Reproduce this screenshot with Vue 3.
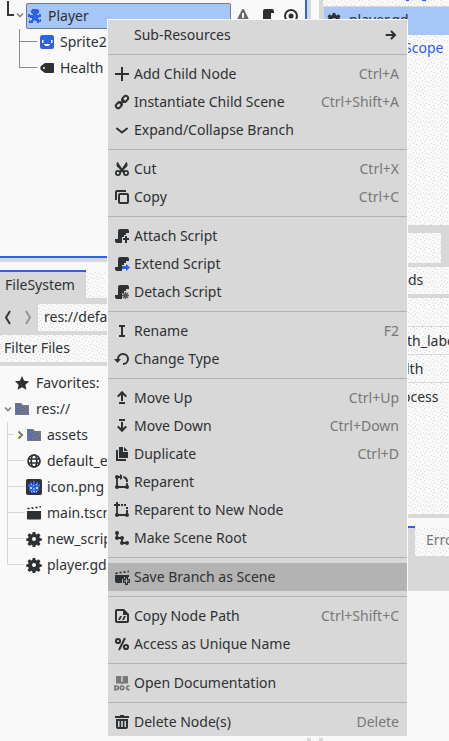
<script setup>
import { h } from 'vue'

const roll = 'M6 1a2 2 0 0 0-2 2v8H1v2a2 2 0 0 0 2 2h7a2 2 0 0 0 2-2V5h3V3a2 2 0 0 0-2-2z'
const rollCut = 'M6 1a2 2 0 0 0-2 2v8H1v2a2 2 0 0 0 2 2h5V9h2V7h2V5h3V3a2 2 0 0 0-2-2z'
const gear = '<path fill-rule="evenodd" d="M6.700 1h2.600l.4 2 1.200.5 1.700-1.200 1.900 1.900-1.200 1.700.5 1.200 2 .4v2.200l-2 .4-.5 1.200 1.200 1.700-1.900 1.900-1.700-1.200-1.200.5-.4 2H6.700l-.4-2-1.200-.5-1.700 1.200-1.900-1.900 1.200-1.700-.5-1.200-2-.4V7.500l2-.4.5-1.200-1.200-1.700 1.900-1.900 1.700 1.200 1.200-.5zM8 6a2 2 0 1 0 0 4 2 2 0 0 0 0-4z"/>'
const folder = '<path fill="#75797e" d="M1 2h6l2 2h6v10H1z"/><path fill="#2b62e8" d="M2 3h2v1H2zm3 0h1v1H5zM3 5h1v1H3zm3 0h1v1H6zM2 7h1v1H2zm2 0h2v1H4zm4-1h1v1H8zM2 9h1v1H2zm3 0h1v1H5zm2-1h1v1H7zm3-1h1v1h-1zm2-1h1v1h-1zM3 11h2v1H3zm4-1h1v1H7zm2-1h1v1H9zm3 0h1v1h-1zm-2 2h1v1h-1zm-2 1h1v1H8zm5-1h1v1h-1zm-8 1h1v1H5z"/>'

const icons = {
  blank: '',
  add: '<path d="M7 1v6H1v2h6v6h2V9h6V7H9V1z"/>',
  link: '<g fill="none" stroke="currentColor" stroke-width="2"><rect x="-3" y="-2.300" width="6.500" height="4.600" rx="2.300" transform="translate(4.700 11.300) rotate(-45)"/><rect x="-3.500" y="-2.300" width="6.500" height="4.600" rx="2.300" transform="translate(11.300 4.700) rotate(-45)"/><path d="M5.800 10.200l4.400-4.400"/></g>',
  chevron: '<path d="M3 6.500l5 4 5-4" fill="none" stroke="currentColor" stroke-width="2" stroke-linecap="round"/>',
  cut: '<path d="M3.500.7C1.800 3.300 2.300 5 4 6.500L6.500 9l-2 1.500 1.600 1.700L8 11l1.900 1.200 1.600-1.700-2-1.500L12 6.500c1.700-1.500 2.200-3.200.5-5.800L8 7.500z"/><circle cx="4" cy="12" r="2.100" fill="none" stroke="currentColor" stroke-width="1.800"/><circle cx="12" cy="12" r="2.100" fill="none" stroke="currentColor" stroke-width="1.800"/>',
  copy: '<path d="M1 11V3a2 2 0 0 1 2-2h9v2H3v8z"/><rect x="5" y="5" width="9" height="9" rx="1" fill="none" stroke="currentColor" stroke-width="2"/>',
  attach: `<path d="${rollCut}"/><path d="M11 8h2v2h2v2h-2v3h-2v-3H9v-2h2z"/>`,
  extend: `<path d="${rollCut}"/><path fill="#2b62e8" d="M8 10h4V8l4 3.500-4 3.500v-2H8z"/>`,
  detach: `<path d="${rollCut}"/><path d="M9 9l5 5m0-5l-5 5m2.500-6v7M8 11.500h7" stroke="#555" stroke-width="1.300"/>`,
  script: `<path d="${roll}"/>`,
  rename: '<path d="M5 2h6v2H9v8h2v2H5v-2h2V4H5z"/>',
  change: '<path d="M4 9V8a5 5 0 1 1 5 5" fill="none" stroke="currentColor" stroke-width="2"/><path d="M0 8h7l-3.500 4z"/>',
  up: '<path d="M8 .7L13 6l-1.300 1.200L9 5v6H7V5L4.300 7.200 3 6zM5 12h6v2H5z"/>',
  down: '<path d="M5 1h6v2H5zM7 4h2v6l2.700-2.200L13 9l-5 5.300L3 9l1.300-1.200L7 10z"/>',
  duplicate: '<path d="M2 4h2v9h8v2H2zM5 1h4v5h5v6H5zM10 1l4 4h-4z"/>',
  reparent: '<path d="M3 3v10h10V9M3 3h4" fill="none" stroke="currentColor" stroke-width="1.800"/><circle cx="3" cy="3" r="2"/><circle cx="3" cy="13" r="2"/><circle cx="13" cy="13" r="2"/><path d="M6 0v6l4-3zM8 2c4 0 6 2 6 6h-2c0-3-1-4-4-4z"/>',
  reparentNew: '<path d="M3 4v9h10V9" fill="none" stroke="currentColor" stroke-width="1.800"/><path d="M2 0h2v2h2v2H4v2H2V4H0V2h2zM7 2h2v2H7zm3 0h2v2h-2zm2 3h2v2h-2zm0 3h2v2h-2z"/><circle cx="3" cy="13" r="2"/><circle cx="13" cy="13" r="2"/>',
  root: '<path d="M3 3v5h5v5h5" fill="none" stroke="currentColor" stroke-width="1.800"/><circle cx="3" cy="3" r="2"/><circle cx="3" cy="8" r="2"/><circle cx="8" cy="8" r="2"/><circle cx="8" cy="13" r="2"/><circle cx="13" cy="13" r="2"/>',
  save: '<path d="M1 4l2-1 1 1.500-2 1zM5 3l2-.5L8 4l-2 .5zM9 2.500l2-.5 1 1.500-2 .5zM13 2l2-.5V3l-1 .5zM1 6h14v2h-5v2H8v4H3a2 2 0 0 1-2-2z"/><path fill-rule="evenodd" d="M11 8h3v2h2v4h-2v2h-3v-2H9v-4h2zm1 1.500v2h-2v1h2v2h1v-2h2v-1h-2v-2z"/>',
  clap: '<path d="M1 3l2-.5L4 4l-2 .5zM5 2.500L7 2l1 1.500L6 4zM9 2l2-.5L12 3l-2 .5zM13 1.500l2-.5v1.500l-1 .5zM1 6h14v7.500a1 1 0 0 1-1 1H2a1 1 0 0 1-1-1z"/>',
  path: '<path fill-rule="evenodd" d="M3 1h7l5 5v7a2 2 0 0 1-2 2H3a2 2 0 0 1-2-2V3a2 2 0 0 1 2-2zm0 2v10h10V7H9V3z"/><path d="M6 8h2l-2 4H4zm4 0h2l-2 4H8z"/>',
  percent: '<g fill="none" stroke="currentColor" stroke-width="2"><circle cx="4" cy="5" r="2.100"/><circle cx="12" cy="11" r="2.100"/><path d="M11 2L5 14"/></g>',
  doc: '<path fill="#777" d="M2 2a1 1 0 0 1 1-1h4.300v6H2zM8.700 1H13a1 1 0 0 1 1 1v5H8.700zM2 7h12v1.500H9L8 9.500 7 8.500H2z"/><g fill="none" stroke="#777" stroke-width="1.700"><path d="M1 11h1.500a1.800 1.800 0 0 1 0 3.700H1z"/><circle cx="8" cy="12.800" r="1.800"/><path d="M15.500 11h-1a1.800 1.800 0 0 0 0 3.700h1"/></g>',
  trash: '<path d="M6 1h4v1h5v2H1V2h5z"/><path fill-rule="evenodd" d="M2 5h12v8a2 2 0 0 1-2 2H4a2 2 0 0 1-2-2zm2 2v6h1.500V7zm3.200 0v6h1.600V7zm3.300 0v6H12V7z"/>',
  arrow: '<path d="M3.500 8h8M8.500 4.500L12 8l-3.500 3.500" fill="none" stroke="currentColor" stroke-width="2" stroke-linecap="round"/>',
  body: '<path fill="#2b62e8" fill-rule="evenodd" d="M5 1h6v1h1v3h-1v1h-1v1h2V6h2v3h-2v1h-1v1h1v1h1v-1h1v3h-2v1h-2v-2H8v-1H7v1H6v2H2v-3h1v1h1v-1h1v-2H3V9H1V6h2v1h3V6H5V5H4V2h1z"/>',
  sprite: '<rect x="1" y="1" width="14" height="14" rx="2.500" fill="#2b62e8"/><path fill="#fff" d="M3 6h1.500v3H3zm9 0h1.500v3H12zM5 10h6v1H5zm1 1h4v1H6z"/>',
  tag: '<path fill-rule="evenodd" d="M6 3h8a1 1 0 0 1 1 1v8a1 1 0 0 1-1 1H6L2.500 10.500a3.500 3.500 0 0 1 0-5zM5 7a1 1 0 1 0 0 2 1 1 0 0 0 0-2z"/>',
  warning: '<path fill="#65696b" fill-rule="evenodd" d="M8 1a1 1 0 0 1 1 .6l6 12c.4.700 0 1.400-.8 1.400H1.800c-.8 0-1.200-.7-.8-1.400l6-12A1 1 0 0 1 8 1zM7 5v5h2V5zm0 6.500v2h2v-2z"/>',
  eye: '<circle cx="8" cy="8" r="6" fill="none" stroke="currentColor" stroke-width="2"/><circle cx="8" cy="8" r="2.500"/>',
  star: '<path d="M8 1l2.100 4.700 5 .6-3.700 3.400 1 5L8 12.200l-4.400 2.500 1-5L.9 6.300l5-.6z"/>',
  folder,
  globe: '<g fill="none" stroke="currentColor" stroke-width="1.700"><circle cx="8" cy="8" r="6"/><ellipse cx="8" cy="8" rx="2.800" ry="6"/><path d="M2.500 6h11M2.500 10h11"/></g>',
  image: '<rect width="16" height="16" rx="2" fill="#303236"/><path fill="#2b62e8" d="M4 3h2v2h1V2h2v3h1V3h2v2h2v3h-1v4h-2v2H5v-2H3V8H2V5h2z"/><path fill="#bfd0f5" d="M4 8h2v2H4zm6 0h2v2h-2zM7.500 9h1v2h-1zM5 12h1v1H5zm2 0h2v1H7zm3 0h1v1h-1zM5 5h1v1H5zm5 0h1v1h-1zM7 6h1v1H7z"/>',
  gear
}

const Icon = (props) => h('svg', { class: 'icon', width: 16, height: 16, viewBox: '0 0 16 16', fill: 'currentColor', innerHTML: icons[props.name] })
Icon.props = ['name']

const groups = [
  [{ icon: 'blank', label: 'Sub-Resources', sub: true }],
  [
    { icon: 'add', label: 'Add Child Node', key: 'Ctrl+A' },
    { icon: 'link', label: 'Instantiate Child Scene', key: 'Ctrl+Shift+A' },
    { icon: 'chevron', label: 'Expand/Collapse Branch' }
  ],
  [{ icon: 'cut', label: 'Cut', key: 'Ctrl+X' }, { icon: 'copy', label: 'Copy', key: 'Ctrl+C' }],
  [
    { icon: 'attach', label: 'Attach Script' },
    { icon: 'extend', label: 'Extend Script' },
    { icon: 'detach', label: 'Detach Script' }
  ],
  [{ icon: 'rename', label: 'Rename', key: 'F2' }, { icon: 'change', label: 'Change Type' }],
  [
    { icon: 'up', label: 'Move Up', key: 'Ctrl+Up' },
    { icon: 'down', label: 'Move Down', key: 'Ctrl+Down' },
    { icon: 'duplicate', label: 'Duplicate', key: 'Ctrl+D' },
    { icon: 'reparent', label: 'Reparent' },
    { icon: 'reparentNew', label: 'Reparent to New Node' },
    { icon: 'root', label: 'Make Scene Root' }
  ],
  [{ icon: 'save', label: 'Save Branch as Scene', active: true }],
  [
    { icon: 'path', label: 'Copy Node Path', key: 'Ctrl+Shift+C' },
    { icon: 'percent', label: 'Access as Unique Name' }
  ],
  [{ icon: 'doc', label: 'Open Documentation' }],
  [{ icon: 'trash', label: 'Delete Node(s)', key: 'Delete' }]
]

const files = [
  { icon: 'globe', label: 'default_e' },
  { icon: 'image', label: 'icon.png' },
  { icon: 'clap', label: 'main.tscn' },
  { icon: 'gear', label: 'new_scrip' },
  { icon: 'gear', label: 'player.gd' }
]
</script>

<template>
  <div class="editor">
    <div class="left">
      <section class="scene">
        <div class="node-row">
          <svg class="guide-root" width="26" height="26"><path d="M8 0v14h6" fill="none" stroke="#333638" stroke-width="2" /><path d="M17 12.500l3 3 3-3" fill="none" stroke="#888" stroke-width="1.700" /></svg>
          <div class="selected"><Icon name="body" /><span>Player</span></div>
          <div class="badges"><Icon name="warning" /><Icon name="script" /><Icon name="eye" /></div>
        </div>
        <div class="children">
          <svg class="guide" width="39" height="52"><path d="M19.500 0v38.500h18M19.500 12.500h18" fill="none" stroke="#888" /></svg>
          <div>
            <div class="tree-row"><Icon name="sprite" /><span>Sprite2</span></div>
            <div class="tree-row"><Icon name="tag" /><span>Health</span></div>
          </div>
        </div>
      </section>
      <section class="files">
        <div class="tabs"><div class="tab">FileSystem</div><div class="tab-rest dots"></div></div>
        <div class="path-bar">
          <svg width="38" height="27"><path d="M10 7l-4 6.500L10 20" fill="none" stroke="#333638" stroke-width="2" /><path d="M26 7l4 6.500L26 20" fill="none" stroke="#929292" stroke-width="2" /></svg>
          <div class="path-field dots">res://defa</div>
        </div>
        <div class="filter dots">Filter Files</div>
        <div class="file-tree">
          <div class="tree-row fav"><Icon name="star" /><span>Favorites:</span></div>
          <div class="tree-row res"><svg width="14" height="16"><path d="M5 6.500l3 3 3-3" fill="none" stroke="#858585" stroke-width="1.700" /></svg><Icon name="folder" /><span>res://</span></div>
          <div class="children">
            <svg class="guide" width="26" height="156"><path d="M7.500 0v142.500h17M7.500 12.500h6M7.500 38.500h17M7.500 64.500h17M7.500 90.500h17M7.500 116.500h17" fill="none" stroke="#d4d4d4" /><path d="M18.500 9.500l3.500 3.500-3.500 3.500" fill="none" stroke="#777" stroke-width="2" /></svg>
            <div>
              <div class="tree-row"><Icon name="folder" /><span>assets</span></div>
              <div v-for="f in files" :key="f.label" class="tree-row"><Icon :name="f.icon" /><span>{{ f.label }}</span></div>
            </div>
          </div>
        </div>
      </section>
      <div class="grips"><i></i><i></i></div>
    </div>

    <div class="right">
      <div class="hint dots"><i></i><i></i></div>
      <div class="script-row"><Icon name="gear" /><span>player.gd</span></div>
      <div class="script-list dots">Scope</div>
      <div class="search"><div class="dots"></div></div>
      <div class="methods dots">ds</div>
      <div class="cell first dots"></div>
      <div class="cell wide dots">th_labe</div>
      <div class="cell dots">lth</div>
      <div class="cell last dots">ocess</div>
      <div class="debugger"><div class="debug-tab dots">Erro</div></div>
    </div>

    <nav class="menu">
      <div v-for="(group, i) in groups" :key="i" class="group">
        <div v-for="item in group" :key="item.label" class="item" :class="{ active: item.active }">
          <Icon :name="item.icon" />
          <span class="label">{{ item.label }}</span>
          <Icon v-if="item.sub" name="arrow" />
          <span v-else class="key">{{ item.key }}</span>
        </div>
      </div>
    </nav>
  </div>
</template>

<style>
body { margin: 0; overflow: hidden; }
</style>

<style scoped>
.editor {
  position: relative;
  display: flex;
  width: 449px;
  height: 741px;
  gap: 8px;
  overflow: hidden;
  background: #f9f9f9;
  color: #2e3133;
  font: 14px/26px "Noto Sans", sans-serif;
  white-space: nowrap;
}
.icon { flex: none; display: block; }
.dots {
  background-color: #f9f9f9;
  background-image: conic-gradient(from 270deg at 1px 1px, #d8d8d8 90deg, transparent 0),
    conic-gradient(from 270deg at 1px 1px, #d8d8d8 90deg, transparent 0),
    conic-gradient(from 270deg at 1px 1px, #d8d8d8 90deg, transparent 0),
    conic-gradient(from 270deg at 1px 1px, #d8d8d8 90deg, transparent 0),
    conic-gradient(from 270deg at 1px 1px, #d8d8d8 90deg, transparent 0),
    conic-gradient(from 270deg at 1px 1px, #d8d8d8 90deg, transparent 0),
    conic-gradient(from 270deg at 1px 1px, #d8d8d8 90deg, transparent 0);
  background-size: 9px 9px;
  background-position: 0 0, 3px 1px, 6px 2px, 1px 4px, 4px 5px, 7px 6px, 2px 7px;
}
.left { width: 311px; flex: none; display: flex; flex-direction: column; }
.scene {
  box-sizing: border-box;
  height: 262px;
  padding-top: 3px;
  border-right: 4px solid #d8d8d8;
  border-bottom: 4px solid #d8d8d8;
  box-shadow: inset -2px -2px #2b62e8;
}
.node-row { display: flex; height: 26px; }
.guide-root { margin-top: -2px; }
.selected {
  box-sizing: border-box;
  display: flex;
  align-items: center;
  width: 205px;
  height: 26px;
  gap: 5px;
  border: 1px solid #777c83;
  border-radius: 2px;
  background: #a6c6f7;
}
.selected span { line-height: 24px; }
.badges { display: flex; align-items: center; gap: 8px; padding-left: 4px; }
.children { display: flex; }
.guide { flex: none; }
.tree-row { display: flex; align-items: center; height: 26px; gap: 5px; }
.files { height: 476px; margin-top: 8px; }
.tabs { display: flex; height: 28px; background: #f9f9f9; }
.tab { box-sizing: border-box; width: 86px; border-top: 2px solid #2b62e8; padding-left: 5px; background: #d8d8d8; }
.tab-rest { width: 19px; margin-top: 2px; }
.path-bar { display: flex; padding: 6px 0 4px; background: #d8d8d8; }
.path-field { flex: 1; height: 27px; padding-left: 6px; }
.filter { height: 27px; padding-left: 4px; }
.file-tree { border-top: 4px solid #d8d8d8; padding-top: 4px; }
.fav { padding-left: 14px; gap: 6px; }
.res { gap: 0; }
.res .icon { margin-right: 6px; }
.grips { display: flex; justify-content: flex-end; gap: 8px; margin: -8px -12px 0 0; }
.grips i { width: 4px; height: 3px; background: #d8d8d8; }
.right { flex: 1; display: flex; flex-direction: column; min-width: 0; }
.right > * { box-sizing: border-box; flex: none; border-left: 4px solid #d8d8d8; }
.hint { display: flex; gap: 13px; height: 7px; padding-left: 83px; border-bottom: 1px solid #d8d8d8; }
.hint i { width: 3px; height: 1px; background: #2b62e8; }
.hint i + i { width: 4px; }
.script-row { display: flex; align-items: center; gap: 5px; height: 28px; padding-left: 2px; background: #a6c6f7; border-left-width: 5px; }
.script-row span, .script-row .icon { margin-top: -2px; }
.script-row span { padding-left: 2px; }
.script-list { height: 190px; padding-left: 81px; color: #2b62e8; }
.search { height: 42px; padding: 8px 8px 4px 0; background: #d8d8d8; }
.search div { height: 30px; }
.methods { height: 27px; padding-left: 85px; }
.cell { height: 28px; padding-left: 83px; line-height: 28px; border-bottom: 1px solid #d8d8d8; }
.cell.first { height: 33px; border-top: 4px solid #d8d8d8; }
.cell.wide { padding-left: 84px; }
.cell.last { height: 135px; border-bottom-width: 4px; padding-left: 79px; }
.debugger { height: 65px; margin-top: 8px; padding-left: 92px; background: linear-gradient(#2b62e8 2px, #d8d8d8 2px); }
.debug-tab { height: 28px; border-top: 2px solid #f9f9f9; padding-left: 11px; line-height: 24px; color: #777; }
.menu {
  position: absolute;
  left: 107px;
  top: 19px;
  width: 299px;
  padding: 1px 0 0;
  border: 1px solid #f9f9f9;
  background: #d8d8d8;
}
.group + .group { margin-top: 5px; padding-top: 5px; border-top: 1px solid #b2b2b2; }
.item { display: flex; align-items: center; height: 28px; padding: 0 8px 0 6px; }
.label { flex: 1; margin-left: 4px; }
.active { background: #b3b3b3; }
.key { color: #777; }
</style>
